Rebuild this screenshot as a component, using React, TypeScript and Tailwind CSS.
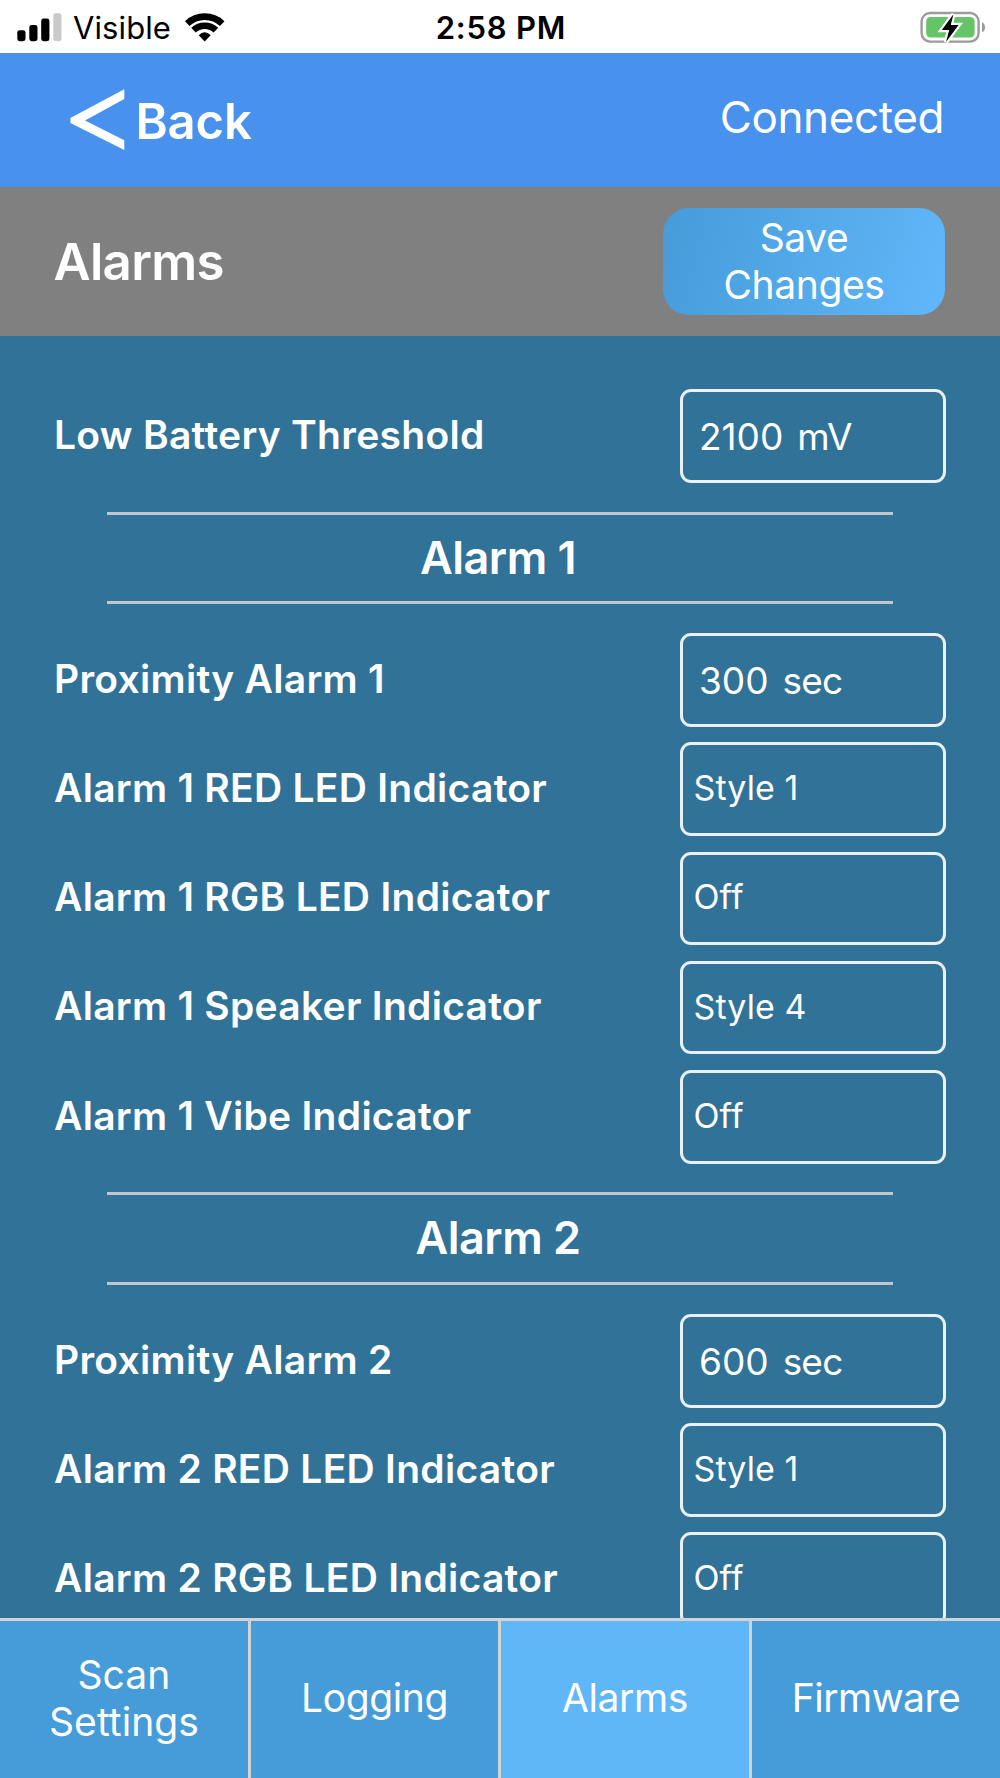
import clsx from "clsx";

type Setting = {
	label: string;
	value: string;
	unit?: string;
};

const alarms: { title: string; settings: Setting[] }[] = [
	{
		title: "Alarm 1",
		settings: [
			{ label: "Proximity Alarm 1", value: "300", unit: "sec" },
			{ label: "Alarm 1 RED LED Indicator", value: "Style 1" },
			{ label: "Alarm 1 RGB LED Indicator", value: "Off" },
			{ label: "Alarm 1 Speaker Indicator", value: "Style 4" },
			{ label: "Alarm 1 Vibe Indicator", value: "Off" },
		],
	},
	{
		title: "Alarm 2",
		settings: [
			{ label: "Proximity Alarm 2", value: "600", unit: "sec" },
			{ label: "Alarm 2 RED LED Indicator", value: "Style 1" },
			{ label: "Alarm 2 RGB LED Indicator", value: "Off" },
		],
	},
];

const tabs = [
	{ name: "Scan Settings", tracking: "tracking-[0.1px]" },
	{ name: "Logging", tracking: "tracking-[-0.4px]" },
	{ name: "Alarms", tracking: "tracking-[-0.4px]" },
	{ name: "Firmware", tracking: "tracking-[-0.5px]" },
];

const SignalIcon = () => (
	<svg width="45" height="29" viewBox="0 0 45 29" aria-hidden="true">
		<rect x="0.3" y="17.2" width="8.2" height="11" rx="2.4" />
		<rect x="12.3" y="12" width="8.2" height="16.2" rx="2.4" />
		<rect x="24.2" y="5.5" width="8.2" height="22.7" rx="2.4" />
		<rect x="36.3" y="0.2" width="8.2" height="28" rx="2.4" fill="#cacaca" />
	</svg>
);

const WifiIcon = () => (
	<svg width="40" height="30" viewBox="0 0 40 30" aria-hidden="true">
		<g fill="none" stroke="#000" strokeWidth="6.6">
			<path d="M2.2 11.6A25.5 25.5 0 0 1 37.2 11.6" />
			<path d="M8.5 18.2A16.2 16.2 0 0 1 30.9 18.2" />
		</g>
		<path d="M19.7 29.5L13.7 23.3Q19.7 17.4 25.7 23.3Z" />
	</svg>
);

const BatteryIcon = () => (
	<svg width="66" height="36" viewBox="0 0 66 36" aria-hidden="true">
		<rect x="1.6" y="4" width="57" height="28.6" rx="8.5" fill="none" stroke="#9b9b9b" strokeWidth="2.4" />
		<rect x="6.2" y="8" width="48.4" height="20.6" rx="4.5" fill="#65c466" />
		<path d="M62 13.2c4 1.6 4 8.6 0 10.2z" fill="#9b9b9b" />
		<path
			d="M33.4 5.2L21.8 21h7.4l-3.2 12L38.6 16h-7.8z"
			fill="#000"
			stroke="#fff"
			strokeWidth="4.4"
			paintOrder="stroke"
		/>
	</svg>
);

const StatusBar = () => (
	<div className="grid h-[53px] shrink-0 grid-cols-[1fr_auto_1fr] items-center bg-white pt-px pr-[14px] pl-[17px] text-[31px] leading-none text-black">
		<div className="flex items-center">
			<SignalIcon />
			<span className="ml-[11px] tracking-[0.1px]">Visible</span>
			<span className="ml-[13.5px]">
				<WifiIcon />
			</span>
		</div>
		<span className="pr-px font-semibold tracking-[0.8px]">2:58 PM</span>
		<span className="justify-self-end">
			<BatteryIcon />
		</span>
	</div>
);

const Header = () => (
	<header className="flex h-[134px] shrink-0 items-center justify-between bg-[#4891ec] pr-[56px] pl-[70px]">
		<button className="flex items-center text-[49px] leading-none font-semibold tracking-[-0.2px]">
			<svg width="55" height="62" viewBox="0 0 55 62" fill="#fff" aria-hidden="true">
				<path d="M54.3 0.2V10L15 31.5L54.3 51.2V61L0.4 33.9V29Z" />
			</svg>
			<span className="ml-[10.5px] pt-[2px]">Back</span>
		</button>
		<span className="pb-[6px] text-[44px] leading-none tracking-[-0.4px]">Connected</span>
	</header>
);

const SettingRow = ({ label, value, unit }: Setting) => (
	<div className="flex h-[94px] shrink-0 items-center justify-between pr-[54px] pl-[54px]">
		<span className="pb-[2px] text-[39px] font-semibold tracking-[0.28px]">{label}</span>
		<div
			className={clsx(
				"flex h-[93.5px] w-[266px] items-center rounded-[11px] border-[3px] border-white/90",
				unit ? "gap-[14px] pt-px pl-4 text-[37px]" : "pb-[3px] pl-[10.5px] text-[34px] tracking-[0.1px]",
			)}
		>
			<span>{value}</span>
			{unit && <span className="tracking-[-0.8px]">{unit}</span>}
		</div>
	</div>
);

const App = () => {
	return (
		<main className="flex h-[1778px] w-[1000px] flex-col overflow-hidden bg-[#307298] font-[Inter,sans-serif] text-white">
			<StatusBar />
			<Header />
			<div className="flex h-[149px] shrink-0 items-center justify-between bg-[#808080] pr-[55px] pl-[53.5px]">
				<h1 className="text-[51px] leading-none font-semibold tracking-[-0.7px]">Alarms</h1>
				<button className="h-[107px] w-[282px] rounded-[26px] bg-linear-105 from-[#469cd9] to-[#60b7fa] px-12 text-[39px] leading-[46.6px] tracking-[-0.4px]">
					Save Changes
				</button>
			</div>
			<div className="flex min-h-0 flex-1 flex-col overflow-hidden pt-[53px]">
				<SettingRow label="Low Battery Threshold" value="2100" unit="mV" />
				{alarms.map(({ title, settings }) => (
					<section key={title} className="shrink-0">
						<h2 className="mx-[107px] mt-[28.5px] mb-[29px] flex h-[92.5px] items-center justify-center border-y-[3px] border-[#d9d5d2]/85 pr-[4px] pb-px text-[45px] font-semibold tracking-[-0.5px]">
							{title}
						</h2>
						<div className="flex flex-col gap-[15.2px]">
							{settings.map((setting) => (
								<SettingRow key={setting.label} {...setting} />
							))}
						</div>
					</section>
				))}
			</div>
			<nav className="grid h-[160px] shrink-0 grid-cols-[251px_250px_251px_248px] border-t-[3px] border-[#d3d3d3]">
				{tabs.map(({ name, tracking }) => (
					<button
						key={name}
						className={clsx(
							"border-r-[3px] border-[#d3d3d3] px-5 pb-[2px] text-[39px] leading-[46.6px] last:border-r-0",
							tracking,
							name === "Alarms" ? "bg-[#60b7f8]" : "bg-[#469cd9]",
						)}
					>
						{name}
					</button>
				))}
			</nav>
		</main>
	);
};

export default App;
